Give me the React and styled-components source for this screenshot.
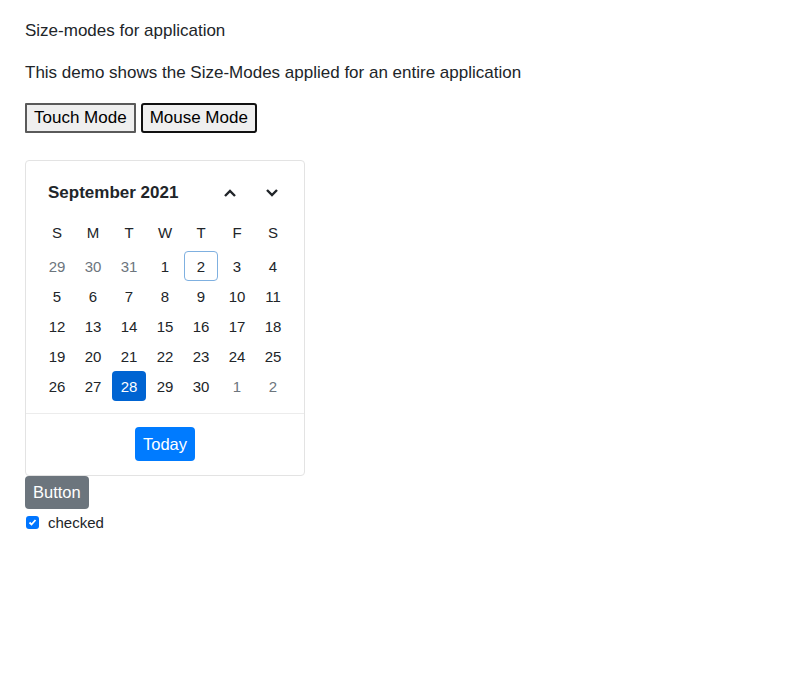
import React from 'react';
import styled, { createGlobalStyle } from 'styled-components';

const Global = createGlobalStyle`
  body {
    margin: 0;
    background: #fff;
    font-family: "Liberation Sans", Arial, sans-serif;
    color: #212529;
  }
`;

const Page = styled.div`
  padding: 21px 25px;
`;

const Title = styled.div`
  font-size: 17px;
  line-height: 20px;
`;

const Text = styled.div`
  margin-top: 22px;
  font-size: 17px;
  line-height: 20px;
`;

const ModeRow = styled.div`
  display: flex;
  gap: 5px;
  margin-top: 20px;
`;

const ModeButton = styled.button`
  height: 30px;
  padding: 0 7px;
  font-family: "Liberation Sans", Arial, sans-serif;
  font-size: 17px;
  color: #000;
  background: #efefef;
  border: 2px solid ${p => (p.$focus ? '#111' : '#5a5a5a')};
  border-radius: ${p => (p.$focus ? '3px' : '1px')};
`;

const Card = styled.div`
  margin-top: 27px;
  width: 280px;
  box-sizing: border-box;
  border: 1px solid #e3e3e3;
  border-radius: 4px;
`;

const Body = styled.div`
  padding: 17px 13px 12px;
`;

const Header = styled.div`
  display: flex;
  align-items: center;
  height: 30px;
  padding-left: 9px;
`;

const Month = styled.div`
  flex: 1;
  font-weight: bold;
  font-size: 17px;
`;

const Nav = styled.div`
  display: flex;
  gap: 14px;
  margin-right: 5px;
`;

const NavButton = styled.span`
  width: 28px;
  height: 28px;
  display: flex;
  align-items: center;
  justify-content: center;
`;

const Grid = styled.div`
  display: grid;
  grid-template-columns: repeat(7, 36px);
  grid-auto-rows: 30px;
  margin-top: ${p => p.$top || 0}px;
  margin-bottom: ${p => p.$bottom || 0}px;
`;

const Cell = styled.div`
  display: flex;
  align-items: center;
  justify-content: center;
  width: 34px;
  height: 30px;
  margin: 0 1px;
  box-sizing: border-box;
  font-size: 15px;
  border-radius: 4px;
  color: ${p => (p.$selected ? '#fff' : p.$muted ? '#6c757d' : '#212529')};
  background: ${p => (p.$selected ? '#0064d2' : 'transparent')};
  border: 1px solid ${p => (p.$today ? '#7fb0e0' : 'transparent')};
`;

const Footer = styled.div`
  border-top: 1px solid #ececec;
  padding: 13px 0 14px;
  display: flex;
  justify-content: center;
`;

const Btn = styled.button`
  height: ${p => p.$h}px;
  padding: 0 ${p => p.$px}px;
  font-family: "Liberation Sans", Arial, sans-serif;
  font-size: 16.5px;
  color: #fff;
  background: ${p => p.$bg};
  border: none;
  border-radius: 4px;
`;

const CheckRow = styled.label`
  display: flex;
  align-items: center;
  gap: 9px;
  margin-top: 5px;
  padding-left: 1px;
  font-size: 15px;
  color: #212529;
`;

const Box = styled.span`
  width: 13px;
  height: 13px;
  border-radius: 3px;
  background: #0075ff;
  display: flex;
  align-items: center;
  justify-content: center;
`;

const Chevron = ({ up }) => (
  <svg width="14" height="10" viewBox="0 0 14 10">
    <polyline
      points={up ? '2,8 7,3 12,8' : '2,2 7,7 12,2'}
      fill="none"
      stroke="#212529"
      strokeWidth="2.4"
    />
  </svg>
);

const weeks = [
  [29, 30, 31, 1, 2, 3, 4],
  [5, 6, 7, 8, 9, 10, 11],
  [12, 13, 14, 15, 16, 17, 18],
  [19, 20, 21, 22, 23, 24, 25],
  [26, 27, 28, 29, 30, 1, 2],
];

export default function App() {
  return (
    <Page>
      <Global />
      <Title>Size-modes for application</Title>
      <Text>This demo shows the Size-Modes applied for an entire application</Text>
      <ModeRow>
        <ModeButton>Touch Mode</ModeButton>
        <ModeButton $focus>Mouse Mode</ModeButton>
      </ModeRow>
      <Card>
        <Body>
          <Header>
            <Month>September 2021</Month>
            <Nav>
              <NavButton><Chevron up /></NavButton>
              <NavButton><Chevron /></NavButton>
            </Nav>
          </Header>
          <Grid $top={9} $bottom={4}>
            {['S', 'M', 'T', 'W', 'T', 'F', 'S'].map((d, i) => (
              <Cell key={i}>{d}</Cell>
            ))}
          </Grid>
          <Grid>
            {weeks.map((w, wi) =>
              w.map((d, di) => (
                <Cell
                  key={wi + '-' + di}
                  $muted={(wi === 0 && d > 20) || (wi === 4 && d < 10)}
                  $today={wi === 0 && d === 2}
                  $selected={wi === 4 && d === 28}
                >
                  {d}
                </Cell>
              ))
            )}
          </Grid>
        </Body>
        <Footer>
          <Btn $bg="#007bff" $h={34} $px={8}>Today</Btn>
        </Footer>
      </Card>
      <div>
        <Btn $bg="#6c757d" $h={33} $px={8}>Button</Btn>
      </div>
      <CheckRow>
        <Box>
          <svg width="9" height="9" viewBox="0 0 9 9">
            <polyline points="1.5,4.5 3.5,6.5 7.5,2" fill="none" stroke="#fff" strokeWidth="1.8" />
          </svg>
        </Box>
        checked
      </CheckRow>
    </Page>
  );
}
